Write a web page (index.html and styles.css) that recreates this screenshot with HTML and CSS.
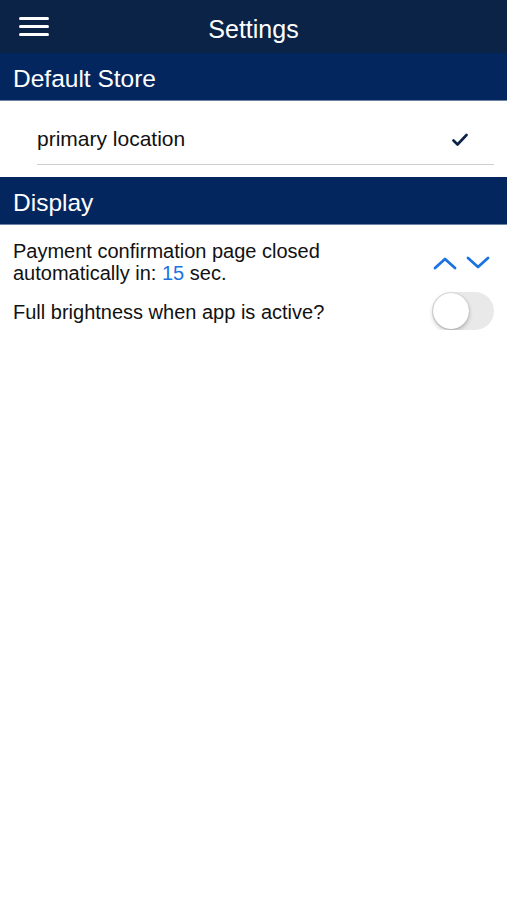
FILE: index.html
```html
<!DOCTYPE html>
<html lang="en">
<head>
    <meta charset="UTF-8">
    <meta name="viewport" content="width=device-width, initial-scale=1.0">
    <title>Settings</title>
    <link rel="stylesheet" href="styles.css">
</head>
<body>

    <!-- Top bar -->
    <div class="nav-bar">
        <div class="menu-button">
            <span></span><span></span><span></span>
        </div>
        <div class="nav-title">Settings</div>
    </div>

    <!-- Default store -->
    <div class="section-header">Default Store</div>
    <div class="store-list">
        <div class="store-row">
            <span class="store-name">primary location</span>
            <svg class="check" width="16" height="14" viewBox="0 0 16 14">
                <path d="M1.5 7.5 L5.5 11.5 L14.5 2" fill="none" stroke="#0b2347" stroke-width="2.6" stroke-linecap="round" stroke-linejoin="round"/>
            </svg>
        </div>
    </div>

    <!-- Display -->
    <div class="section-header">Display</div>
    <div class="setting-row">
        <div class="setting-text">
            <span class="line">Payment confirmation page closed</span>
            <span class="line">automatically in: <span class="value">15</span> sec.</span>
        </div>
        <div class="stepper">
            <svg width="24" height="14" viewBox="0 0 24 14">
                <path d="M2 12 L12 3 L22 12" fill="none" stroke="#1a73e0" stroke-width="2.8" stroke-linecap="round" stroke-linejoin="round"/>
            </svg>
            <svg width="24" height="14" viewBox="0 0 24 14">
                <path d="M2 2 L12 11 L22 2" fill="none" stroke="#1a73e0" stroke-width="2.8" stroke-linecap="round" stroke-linejoin="round"/>
            </svg>
        </div>
    </div>
    <div class="setting-row toggle-row">
        <div class="setting-text">Full brightness when app is active?</div>
        <div class="toggle"><div class="knob"></div></div>
    </div>

</body>
</html>
```

FILE: styles.css
```css
body {
    font-family: "Liberation Sans", Arial, sans-serif;
    margin: 0;
    padding: 0;
    background: #ffffff;
    color: #111111;
}

.nav-bar {
    height: 53px;
    background: #0b2347;
    display: flex;
    align-items: center;
    position: relative;
    color: #ffffff;
}

.menu-button {
    width: 30px;
    margin-left: 19px;
    display: flex;
    flex-direction: column;
    gap: 5px;
}

.menu-button span {
    display: block;
    height: 3px;
    background: #ffffff;
    border-radius: 2px;
}

.nav-title {
    position: absolute;
    left: 0;
    right: 0;
    text-align: center;
    font-size: 25px;
    pointer-events: none;
    padding-top: 5px;
}

.section-header {
    height: 48px;
    box-sizing: border-box;
    background: #03265f;
    color: #ffffff;
    font-size: 24.5px;
    padding-left: 13px;
    padding-top: 4px;
    display: flex;
    align-items: center;
    border-bottom: 1px solid #6d83a8;
}

.store-list {
    padding: 0 13px 12px 37px;
}

.store-row {
    height: 64px;
    box-sizing: border-box;
    display: flex;
    align-items: center;
    justify-content: space-between;
    border-bottom: 1px solid #cfcfcf;
    padding-right: 26px;
    padding-top: 13px;
}

.store-name {
    font-size: 21px;
}

.check {
    margin-top: 2px;
}

.setting-row {
    display: flex;
    align-items: center;
    justify-content: space-between;
    padding: 15px 13px 0 13px;
}

.setting-text {
    font-size: 20px;
    line-height: 22px;
}

.setting-text .line {
    display: block;
}

.value {
    color: #1a73e0;
}

.stepper {
    display: flex;
    gap: 9px;
    margin-right: 4px;
    margin-top: 2px;
}

.toggle-row {
    padding-top: 8px;
}

.toggle-row .setting-text {
    padding-top: 2px;
}

.toggle {
    width: 62px;
    height: 38px;
    border-radius: 19px;
    background: #e9e9ea;
    position: relative;
}

.knob {
    position: absolute;
    left: 1px;
    top: 1px;
    width: 36px;
    height: 36px;
    border-radius: 50%;
    background: #ffffff;
    box-shadow: 0 2px 4px rgba(0, 0, 0, 0.25), 0 0 1px rgba(0, 0, 0, 0.3);
}
```
